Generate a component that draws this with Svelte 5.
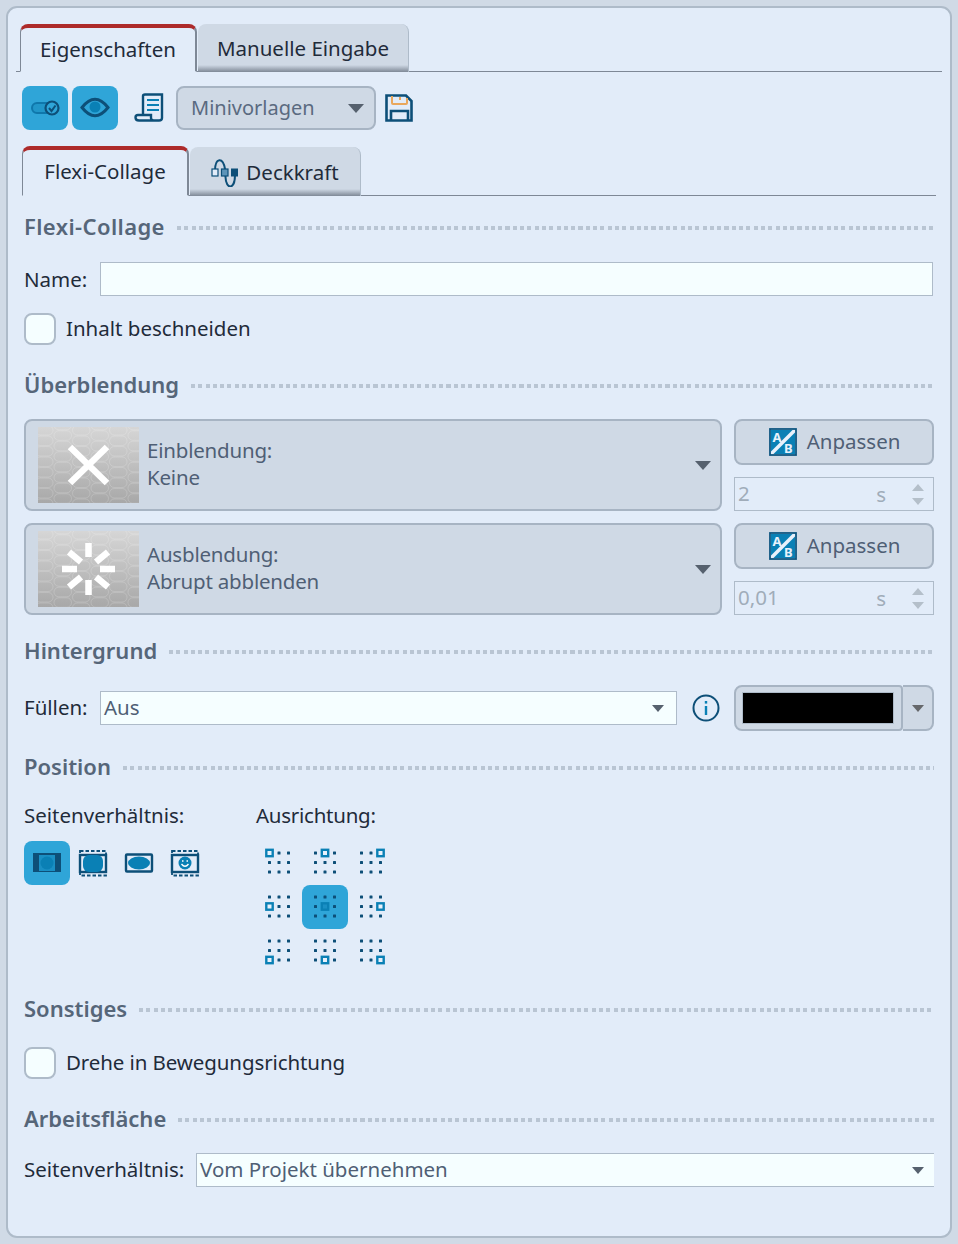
<script>
  const aligns = [
    [0, 0], [1, 0], [2, 0],
    [0, 1], [1, 1], [2, 1],
    [0, 2], [1, 2], [2, 2]
  ];
  const dots = [0, 1, 2];
</script>

{#snippet ab()}
  <svg class="ab" viewBox="0 0 28 28" width="28" height="28">
    <rect x="1" y="1" width="26" height="26" fill="#e8f1fb" stroke="#0f5680" stroke-width="1.800" />
    <path d="M2 23.500 L23.500 2 H2 Z" fill="#0a80b5" />
    <path d="M26 4.500 V26 H4.500 Z" fill="#0a80b5" />
    <text x="3.500" y="14" class="abt">A</text>
    <text x="15" y="25" class="abt">B</text>
  </svg>
{/snippet}

{#snippet caret()}
  <svg class="caret" viewBox="0 0 16 9" width="16" height="9"><path d="M0 0 H16 L8 9 Z" fill="#56616e" /></svg>
{/snippet}

{#snippet spin(val)}
  <div class="spin">
    <span class="val">{val}</span>
    <span class="unit">s</span>
    <span class="arrows">
      <svg viewBox="0 0 12 7" width="12" height="7"><path d="M0 7 L6 0 L12 7 Z" fill="#b4bfca" /></svg>
      <svg viewBox="0 0 12 7" width="12" height="7"><path d="M0 0 L6 7 L12 0 Z" fill="#b4bfca" /></svg>
    </span>
  </div>
{/snippet}

{#snippet thumb(kind)}
  <svg class="thumb" viewBox="0 0 101 76" width="101" height="76">
    <defs>
      <linearGradient id="tg{kind}" x1="0" y1="0" x2="0" y2="1">
        <stop offset="0" stop-color="#d6d6d6" />
        <stop offset="1" stop-color="#a8a8a8" />
      </linearGradient>
      <pattern id="hx{kind}" width="37" height="21" patternUnits="userSpaceOnUse" x="-3" y="-2">
        <g fill="none" stroke="#fff" stroke-opacity=".16" stroke-width="1">
          <rect x=".5" y=".5" width="17.500" height="9.500" rx="4.700" />
          <rect x=".5" y="11" width="17.500" height="9.500" rx="4.700" />
          <rect x="19" y="-4.750" width="17.500" height="9.500" rx="4.700" />
          <rect x="19" y="5.750" width="17.500" height="9.500" rx="4.700" />
          <rect x="19" y="16.250" width="17.500" height="9.500" rx="4.700" />
        </g>
      </pattern>
    </defs>
    <rect width="101" height="76" fill="url(#tg{kind})" />
    <rect width="101" height="76" fill="url(#hx{kind})" />
    {#if kind === 'x'}
      <path d="M32 20 L69 56 M69 20 L32 56" stroke="#fff" stroke-width="6.500" />
    {:else}
      <g stroke="#fff" stroke-width="6.500">
        <path d="M50.500 12 V26 M50.500 49 V64 M24 38 H39 M62 38 H77" />
        <path d="M31 21 L43 31 M70 21 L58 31 M31 56 L43 46 M70 56 L58 46" />
      </g>
    {/if}
  </svg>
{/snippet}

<div class="panel">
  <div class="tabs top">
    <div class="tab active t1">Eigenschaften</div>
    <div class="tab t2">Manuelle Eingabe</div>
  </div>

  <div class="toolbar">
    <button class="iconbtn" aria-label="Schalter">
      <svg viewBox="0 0 46 44" width="46" height="44">
        <rect x="10" y="17" width="22" height="10" rx="5" fill="#2196c9" stroke="#0f77ab" stroke-width="2" />
        <circle cx="30" cy="22" r="6.500" fill="#2fa5d8" stroke="#0d4f78" stroke-width="2.200" />
        <path d="M27 22 L29.500 25 L33.500 19.500" fill="none" stroke="#0d4f78" stroke-width="2" />
      </svg>
    </button>
    <button class="iconbtn second" aria-label="Sichtbar">
      <svg viewBox="0 0 46 44" width="46" height="44">
        <path d="M10 21.500 Q23 5 36 21.500 Q23 38 10 21.500 Z" fill="none" stroke="#0d4f78" stroke-width="3" />
        <circle cx="23" cy="21" r="5.500" fill="#0a80b5" />
      </svg>
    </button>
    <svg class="doc" viewBox="0 0 30 30" width="30" height="30">
      <path d="M9 22 V3 Q9 1.500 11 1.500 H28 V25 Q28 27.500 25 27.500 H5 Q1.500 27.500 1.500 24.500 Q1.500 22 4 22 H17 V25 Q17 27.500 20 27.500" fill="none" stroke="#0d4f78" stroke-width="2.400" />
      <path d="M13 7 H25 M13 12 H25 M13 17 H25" stroke="#0a80b5" stroke-width="2.200" />
    </svg>
    <div class="mini">
      <span>Minivorlagen</span>
      {@render caret()}
    </div>
    <svg class="save" viewBox="0 0 28 28" width="28" height="28">
      <path d="M1.500 1.500 H21 L26.500 7 V26.500 H1.500 Z" fill="none" stroke="#0d4f78" stroke-width="2.600" />
      <path d="M7 2 V9 Q7 10 8 10 H21 Q22 10 22 9 V4" fill="none" stroke="#e9a75c" stroke-width="2" />
      <path d="M15 3 V6" stroke="#e9a75c" stroke-width="2" />
      <path d="M6 26 V17 H23 V26" fill="none" stroke="#0d4f78" stroke-width="2.600" />
    </svg>
  </div>

  <div class="tabs sub">
    <div class="tab active s1">Flexi-Collage</div>
    <div class="tab s2">
      <svg viewBox="0 0 28 28" width="28" height="28">
        <path d="M4 12 C4 -2 12 -2 14 10 L14.500 18 C15 31 24 31 24 16" fill="none" stroke="#0d4f78" stroke-width="2" />
        <rect x="1" y="10" width="6" height="7" fill="#e2ecf9" stroke="#0d4f78" stroke-width="1.200" />
        <rect x="10.500" y="10" width="6.500" height="7" fill="#5d94b8" stroke="#0d4f78" stroke-width="1.200" />
        <rect x="20" y="9.500" width="7" height="8" fill="#0d4f78" />
      </svg>
      <span class="lift">Deckkraft</span>
    </div>
  </div>

  <div class="head h-flexi"><span>Flexi-Collage</span><i></i></div>
  <div class="row name">
    <label for="n">Name:</label>
    <input id="n" class="field grow" />
  </div>
  <div class="check c1"><span class="box"></span><span class="lift">Inhalt beschneiden</span></div>

  <div class="head h-ueber"><span>Überblendung</span><i></i></div>
  <div class="trans t-first">
    <div class="drop">
      {@render thumb('x')}
      <div class="dt">Einblendung:<br />Keine</div>
      {@render caret()}
    </div>
    <div class="side">
      <button class="adapt">{@render ab()}<span class="lift">Anpassen</span></button>
      {@render spin('2')}
    </div>
  </div>
  <div class="trans t-second">
    <div class="drop">
      {@render thumb('s')}
      <div class="dt">Ausblendung:<br />Abrupt abblenden</div>
      {@render caret()}
    </div>
    <div class="side">
      <button class="adapt">{@render ab()}<span class="lift">Anpassen</span></button>
      {@render spin('0,01')}
    </div>
  </div>

  <div class="head h-hinter"><span>Hintergrund</span><i></i></div>
  <div class="row fill">
    <span class="lbl lift">Füllen:</span>
    <div class="field combo w577"><span class="lift">Aus</span><svg viewBox="0 0 12 7" width="12" height="7"><path d="M0 0 H12 L6 7 Z" fill="#56616e" /></svg></div>
    <svg class="info" viewBox="0 0 28 28" width="28" height="28">
      <circle cx="14" cy="14" r="12.500" fill="none" stroke="#0d4f78" stroke-width="2" />
      <rect x="12.800" y="12" width="2.400" height="9" fill="#0a80b5" />
      <rect x="12.800" y="7" width="2.400" height="2.600" fill="#0a80b5" />
    </svg>
    <div class="color">
      <div class="swatchwrap"><div class="swatch"></div></div>
      <div class="colorarrow">
        <svg viewBox="0 0 12 7" width="12" height="7"><path d="M0 0 H12 L6 7 Z" fill="#66686b" /></svg>
      </div>
    </div>
  </div>

  <div class="head h-pos"><span>Position</span><i></i></div>
  <div class="pos">
    <div class="ratio">
      <div class="lbl">Seitenverhältnis:</div>
      <div class="ratios">
        <button class="iconbtn" aria-label="Einpassen">
          <svg viewBox="0 0 46 44" width="46" height="44">
            <rect x="9" y="12" width="28" height="19" fill="#0d4f78" />
            <rect x="15" y="14" width="16" height="16" fill="#1a8fc4" />
            <circle cx="23" cy="22" r="6.500" fill="#0a80b5" />
          </svg>
        </button>
        <span class="ri" aria-hidden="true">
          <svg viewBox="0 0 46 44" width="46" height="44">
            <rect x="10" y="10" width="26" height="24.500" fill="none" stroke="#0d4f78" stroke-width="1.800" stroke-dasharray="3.500 2" />
            <rect x="10" y="14" width="26" height="17" fill="#e2ecf9" stroke="#0d4f78" stroke-width="2.400" />
            <rect x="13" y="14" width="20" height="17" rx="6" fill="#0a80b5" />
          </svg>
        </span>
        <span class="ri" aria-hidden="true">
          <svg viewBox="0 0 46 44" width="46" height="44">
            <rect x="10" y="13.500" width="26" height="17" rx="1" fill="#e2ecf9" stroke="#0d4f78" stroke-width="2.400" />
            <ellipse cx="23" cy="22" rx="11" ry="6.500" fill="#0a80b5" />
          </svg>
        </span>
        <span class="ri" aria-hidden="true">
          <svg viewBox="0 0 46 44" width="46" height="44">
            <rect x="10" y="10" width="26" height="24.500" fill="none" stroke="#0d4f78" stroke-width="1.800" stroke-dasharray="3.500 2" />
            <rect x="10" y="14" width="26" height="17" fill="#e2ecf9" stroke="#0d4f78" stroke-width="2.400" />
            <circle cx="23" cy="22" r="6.500" fill="#0a80b5" />
            <path d="M19.500 23 Q23 27.500 26.500 23" fill="none" stroke="#fff" stroke-width="1.300" />
            <path d="M20 20 H21.500 M24.500 20 H26" stroke="#fff" stroke-width="1.300" />
          </svg>
        </span>
      </div>
    </div>
    <div class="align">
      <div class="lbl">Ausrichtung:</div>
      <div class="agrid">
        {#each aligns as [ax, ay]}
          <span class="cell" class:on={ax === 1 && ay === 1}>
            <svg viewBox="0 0 46 44" width="46" height="44">
              {#each dots as dy}
                {#each dots as dx}
                  {#if dx === ax && dy === ay}
                    <rect x={12 + dx * 9.500 - 1.700} y={10.500 + dy * 9.500 - 1.700} width="6.400" height="6.400" fill={ax === 1 && ay === 1 ? '#1a8fc4' : '#e8f1fb'} stroke="#0a80b5" stroke-width="2.400" />
                  {:else}
                    <rect x={12 + dx * 9.500} y={10.500 + dy * 9.500} width="3" height="3" rx=".5" fill="#0d4f78" />
                  {/if}
                {/each}
              {/each}
            </svg>
          </span>
        {/each}
      </div>
    </div>
  </div>

  <div class="head h-sonst"><span>Sonstiges</span><i></i></div>
  <div class="check c2"><span class="box"></span><span class="c2t lift">Drehe in Bewegungsrichtung</span></div>

  <div class="head h-arbeit"><span>Arbeitsfläche</span><i></i></div>
  <div class="row work">
    <span class="lbl lift">Seitenverhältnis:</span>
    <div class="field combo grow open"><span class="lift">Vom Projekt übernehmen</span><svg viewBox="0 0 12 7" width="12" height="7"><path d="M0 0 H12 L6 7 Z" fill="#56616e" /></svg></div>
  </div>
</div>

<style>
  :global(body) {
    margin: 0;
    background: #d0dae6;
  }
  * {
    box-sizing: border-box;
  }
  .panel {
    width: 946px;
    height: 1232px;
    margin: 6px 0 0 6px;
    padding: 16px 16px 0;
    background: #e2ecf9;
    border: 2px solid #aebbc9;
    border-radius: 11px;
    font-family: "Noto Sans", "Open Sans", sans-serif;
    font-size: 20.5px;
    line-height: 28px;
    color: #1f2b3a;
  }
  .lift { margin-top: -2px; }
  .tabs {
    display: flex;
    align-items: flex-end;
    border-bottom: 1px solid #7e8896;
  }
  .tabs.top {
    height: 48px;
    margin: 0 -8px;
    padding-left: 4px;
  }
  .tabs.sub {
    height: 50px;
    margin: 16px -2px 0 -2px;
  }
  .tab {
    display: flex;
    align-items: center;
    justify-content: center;
    gap: 7px;
    border-radius: 8px 8px 0 0;
  }
  .tab:not(.active) {
    background: linear-gradient(#cfd9e5 calc(100% - 7px), #7e8896);
    border-right: 1px solid #aebbc9;
    margin-bottom: -1px;
  }
  .tab.active {
    background: #e2ecf9;
    border-top: 4px solid #ad2a2a;
    border-left: 1px solid #7e8896;
    border-right: 2px solid #7e8896;
    margin-bottom: -1px;
    border-bottom: 1px solid #e2ecf9;
  }
  .t1 { width: 177px; height: 48px; padding-bottom: 2px; }
  .t2 { width: 211px; height: 48px; margin-left: 1px; }
  .s1 { width: 167px; height: 50px; padding-bottom: 4px; }
  .s2 { width: 171px; height: 49px; margin-left: 1px; padding-top: 3px; }
  .toolbar {
    display: flex;
    align-items: center;
    height: 44px;
    margin: 14px 0 0 -2px;
  }
  .iconbtn {
    width: 46px;
    height: 44px;
    padding: 0;
    border: 0;
    border-radius: 8px;
    background: #2fa5d8;
    display: block;
  }
  .iconbtn svg { display: block; }
  .second { margin-left: 4px; }
  .doc { margin-left: 16px; }
  .mini {
    width: 200px;
    height: 44px;
    margin-left: 12px;
    padding: 0 10px 0 13px;
    display: flex;
    align-items: center;
    justify-content: space-between;
    background: #cfd9e5;
    border: 2px solid #a7b4c3;
    border-radius: 8px;
    color: #5a6a80;
    font-size: 20px;
  }
  .save { margin-left: 9px; }
  .head {
    display: flex;
    align-items: center;
    gap: 12px;
    height: 30px;
    font-size: 22px;
    font-weight: 600;
    color: #566679;
  }
  .head span { margin-top: -2px; }
  .head i {
    flex: 1;
    height: 4px;
    margin-top: 1px;
    background: repeating-linear-gradient(90deg, #b9c5d3 0 4px, transparent 4px 7.300px);
  }
  .h-flexi { margin-top: 16px; }
  .h-flexi span { letter-spacing: .4px; }
  .h-ueber { margin-top: 25px; }
  .h-hinter { margin-top: 21px; }
  .h-pos { margin-top: 21px; }
  .h-sonst { margin-top: 27px; }
  .h-arbeit { margin-top: 25px; }
  .row {
    display: flex;
    align-items: center;
  }
  .lbl { display: block; }
  .name {
    margin-top: 20px;
    height: 34px;
  }
  .name label { width: 76px; flex: none; }
  .field {
    height: 34px;
    background: #f5feff;
    border: 1px solid #aebbc9;
    font: inherit;
    color: #4f5f75;
  }
  .grow { flex: 1; min-width: 0; margin-right: 1px; }
  .check {
    display: flex;
    align-items: center;
    gap: 10px;
    height: 32px;
  }
  .box {
    width: 32px;
    height: 32px;
    background: #f5feff;
    border: 2px solid #aebbc9;
    border-radius: 8px;
  }
  .c1 { margin-top: 17px; }
  .c2 { margin-top: 23px; }
  .c2t { letter-spacing: -.1px; }
  .trans {
    display: flex;
    gap: 12px;
    height: 92px;
  }
  .t-first { margin-top: 19px; }
  .t-second { margin-top: 12px; }
  .drop {
    width: 698px;
    display: flex;
    align-items: center;
    padding: 0 9px 0 12px;
    background: #cfd9e5;
    border: 2px solid #a7b4c3;
    border-radius: 8px;
    color: #4f5f75;
  }
  .thumb { flex: none; display: block; }
  .dt { flex: 1; margin: -2px 0 0 8px; letter-spacing: -.2px; line-height: 27.500px; }
  .side { width: 200px; }
  .adapt {
    width: 200px;
    height: 46px;
    display: flex;
    align-items: center;
    justify-content: center;
    gap: 10px;
    padding: 0 0 0 1px;
    background: #cfd9e5;
    border: 2px solid #a7b4c3;
    border-radius: 8px;
    font: inherit;
    color: #4f5f75;
  }
  .ab { display: block; }
  .abt {
    font-size: 13px;
    font-weight: 700;
    font-family: "Noto Sans", sans-serif;
    fill: #e8f1fb;
  }
  .spin {
    height: 34px;
    margin-top: 12px;
    display: flex;
    align-items: center;
    padding: 0 9px 0 3px;
    border: 1px solid #aebbc9;
    color: #a0acb9;
  }
  .val { flex: 1; margin-top: -2px; }
  .unit { margin-right: 26px; }
  .arrows {
    display: flex;
    flex-direction: column;
    gap: 7px;
  }
  .arrows svg { display: block; }
  .fill {
    margin-top: 19px;
    height: 46px;
  }
  .fill .lbl { width: 76px; flex: none; }
  .combo {
    display: flex;
    align-items: center;
    justify-content: space-between;
    padding: 0 12px 0 3px;
  }
  .w577 { width: 577px; }
  .info { margin-left: 15px; flex: none; }
  .color {
    display: flex;
    margin-left: 14px;
    width: 200px;
    height: 46px;
  }
  .swatchwrap {
    width: 169px;
    padding: 5px 7px 5px 6px;
    background: #cfd9e5;
    border: 2px solid #a7b4c3;
    border-radius: 8px 4px 4px 8px;
  }
  .swatch {
    height: 100%;
    background: #000;
    border: 1px solid #aebbc9;
  }
  .colorarrow {
    flex: 1;
    display: flex;
    align-items: center;
    justify-content: center;
    background: #cfd9e5;
    border: 2px solid #a7b4c3;
    border-left: 0;
    border-radius: 0 8px 8px 0;
  }
  .pos {
    display: flex;
    margin-top: 19px;
    height: 166px;
  }
  .ratio { width: 232px; }
  .ratios {
    display: flex;
    margin-top: 12px;
  }
  .ri { display: block; width: 46px; height: 44px; }
  .ri svg { display: block; }
  .align .lbl { letter-spacing: -.25px; }
  .agrid {
    display: grid;
    grid-template-columns: repeat(3, 46px);
    grid-auto-rows: 44px;
    margin-top: 12px;
  }
  .cell { display: block; border-radius: 8px; }
  .cell svg { display: block; }
  .cell.on { background: #2fa5d8; }
  .work {
    margin-top: 19px;
    height: 34px;
  }
  .work .lbl { width: 172px; flex: none; }
  .open {
    margin-right: 0;
    border-right: 0;
    padding-right: 10px;
  }
</style>
